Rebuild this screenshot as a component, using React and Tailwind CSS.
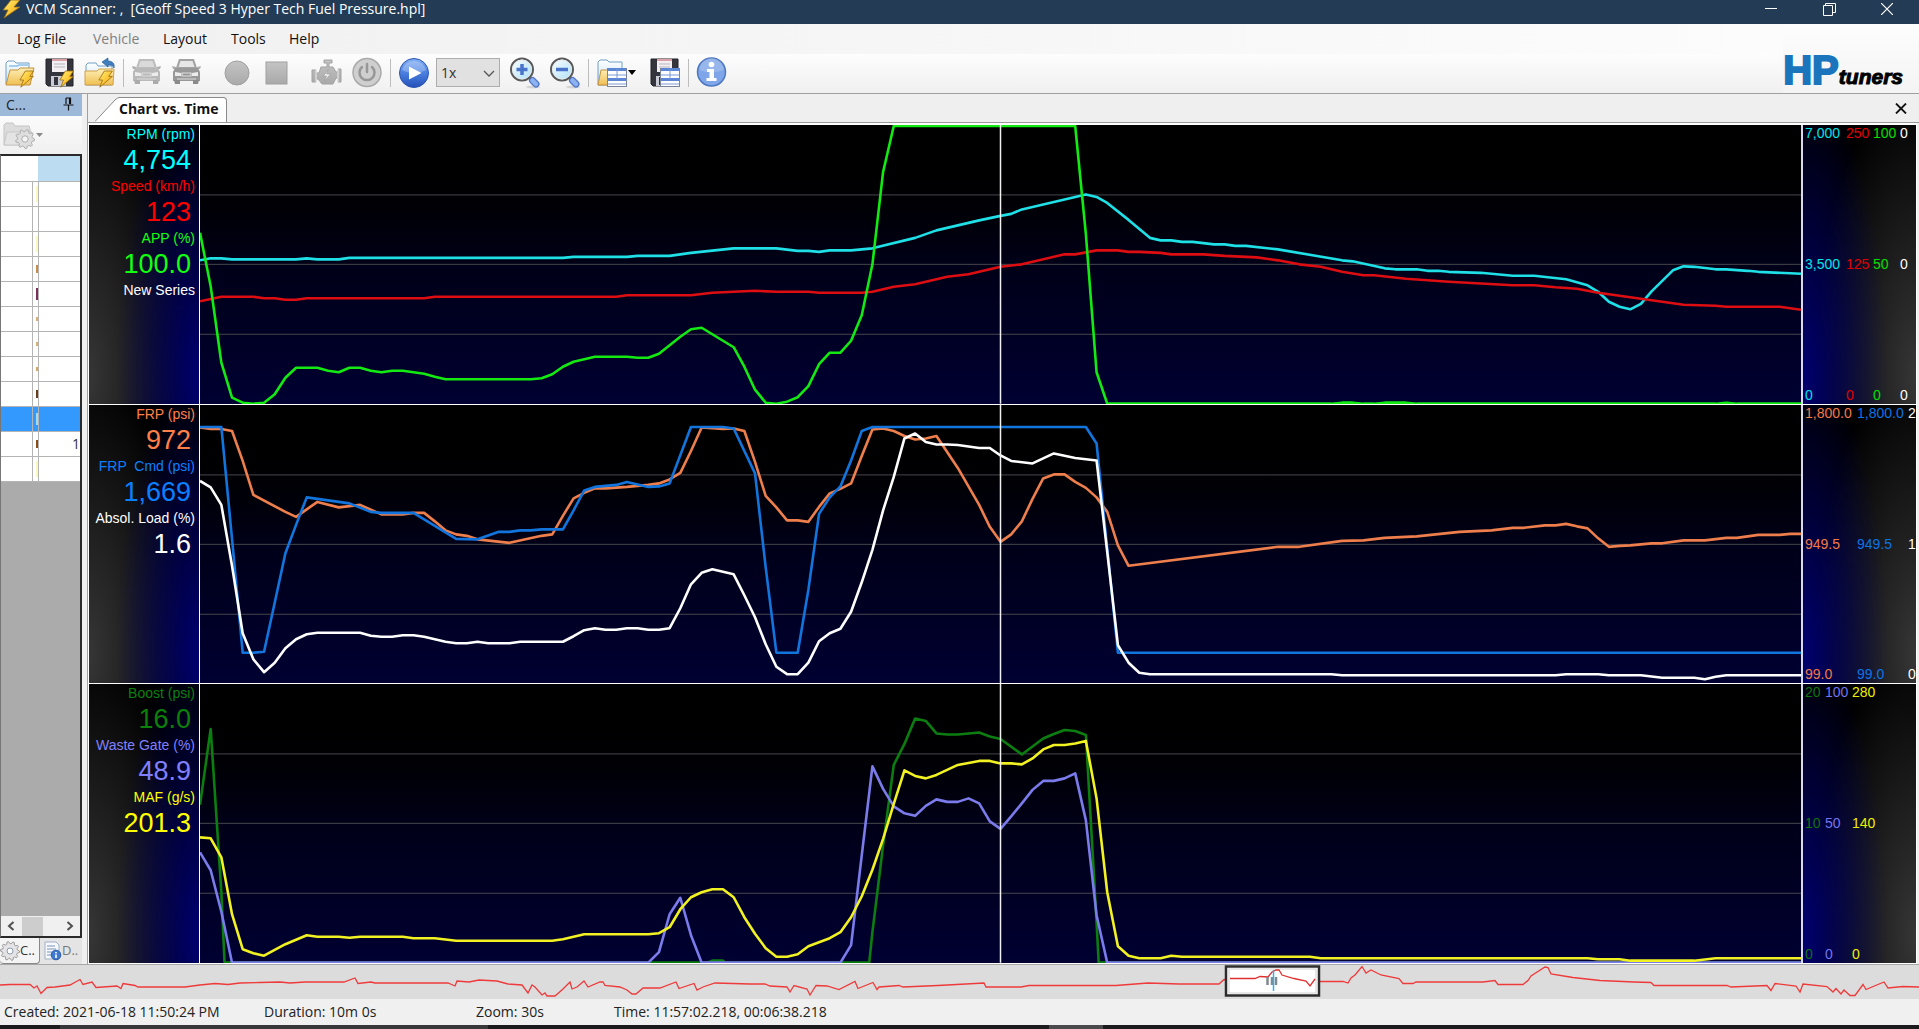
import React from "react";

const RAW = {
  rpm: "0 135.5 1 133.5 2 133.5 3 134.5 9 134.5 10 133.5 11 134.5 13 134.5 14 133 34 133 35 132 40 132 41 131 44 131 46 128 50 123.5 54 123.5 56 126 57 126 58 127 59 125.5 61 125.5 63 123.5 67 113 69 105.5 73 95.5 75 91 76 89 77 84.5 83 69.5 84 72 85 78 87 95 89 113 90 115.5 91 115.5 92 117 93 117 95 119.5 96 119.5 97 121 98 121 101 124.5 107 135.5 108 136.5 111 143.5 112 144.5 114 144.5 115 146 116 146 117 147 120 148 123 151 125 151 128 154.5 130 160.5 131 167 132 177 133 182 134 184.5 135 179 136 166.5 138 145.5 139 141.5 140 142 142 144.5 143 144.5 145 146 146 147 149 148.5 150 149",
  speed: "0 176.5 2 172 5 172 6 173.5 7 173.5 8 175 9 175 10 173.5 21 173.5 22 172 39 172 40 170.5 46 170.5 48 168 50 167 52 166 54 167 57 167 58 168 62 168 63 167 65 162 67 159.5 70 152 72 149.5 75 142 77 139.5 81 129.5 82 129.5 84 125.5 86 125.5 87 127 88 127 90 128 91 129.5 94 129.5 96 131 99 132.5 101 135.5 103 139.5 105 142 107 147 109 150.5 110 150.5 113 154 117 157 123 160.5 125 160.5 127 162.5 129 164 131 168 134 172.5 136 175.5 139 180 142 181 143 182 148 182 150 185",
  app: "0 108 1 161.5 2 238 3 273 4 278 5 279 6 278 7 269.5 8 253 9 243 11 243 12 246 13 247.5 14 243 15 243 16 246 17 247.5 18 246 19 246 21 249 22 252 23 254.5 31 254.5 32 253.5 33 249.5 34 242 35 237 37 232 40 232 41 233 42 233 43 229 44 220.5 45 212 46 204.5 47 203 48 209.5 50 222.5 51 242 52 265 53 278 54 279 55 277 56 272.5 57 261.5 58 239.5 59 228 60 228 61 216 62 190.5 63 139.5 64 47 65 1 82 1 83 109.5 84 247.5 85 279 106 279 107 278 108 278 109 279 110 279 111 278 113 278 114 279 142 279 143 278 144 279 150 279",
  frp: "0 22.5 1 24 2 24 3 26 4 56 5 90 8 107 9 112 10 104.5 11 97 13 102.5 15 100 17 109.5 19 109.5 20 108 21 108 22 116.5 23 125.5 24 129.5 25 131 26 134.5 29 138 32 131 33 129.5 34 111 35 93.5 36 88 37 83.5 38 83.5 40 82 42 80 43 78.5 44 74.5 45 68 46 46 47 22.5 49 24 50 23.5 51 26 52 57 53 91 54 102.5 55 115.5 56 115.5 57 117 58 102 59 88.5 60 84 61 78.5 62 51 63 24.5 64 23.5 65 26 66 31 67 34.5 68 33.5 69 31 71 63 73 100 74 122 75 137 76 129.5 77 116.5 78 94 79 73.5 80 69.5 81 69.5 82 77 83 83 84 92.5 85 107 86 140.5 87 161 101 142 103 142 107 136 109 135.5 111 133 114 131.5 118 127 121 125.5 123 123 124 123 126 120.5 127 120.5 128 119 129 121.5 130 123.5 131 133.5 132 142 133 141 134 140.5 136 138.5 137 138.5 139 135.5 141 135.5 143 133 144 133 146 130 148 130 149 129 150 129",
  cmd: "0 22 2 22 3 134 4 248 5 248 6 247 7 198 8 148.5 9 120 10 92.5 12 95.5 14 98.5 16 107 17 108 20 108 21 114.5 24 134 26 134.5 28 127 29 127 30 125.5 31 125.5 32 124.5 34 124.5 35 105.5 36 85.5 37 82 39 80 40 77 42 82 43 81.5 44 78.5 46 22 49 22 50 23.5 52 68.5 53 162.5 54 248 56 248 57 185 58 109 59 92.5 60 81.5 61 55.5 62 26 63 22 83 22 84 38.5 86 248 150 248",
  load: "0 76 1 82.5 2 100 3 161 4 228.5 5 254.5 6 267.5 7 258 8 243.5 9 234.5 10 229.5 11 228 15 228 16 231 17 232 18 232 19 230.5 20 230.5 21 232 23 237 24 238.5 25 238.5 26 237 27 238.5 29 238.5 30 237 34 237 35 231.5 36 225.5 37 223.5 38 225 39 225 40 223.5 41 223.5 42 225 43 225 44 223.5 45 203.5 46 179.5 47 168 48 164.5 50 169.5 51 190.5 52 212.5 53 239.5 54 262 55 269.5 56 269.5 57 258 58 236.5 59 228.5 60 224 61 207 62 177.5 63 145 64 105.5 65 72 66 33.5 67 28.5 68 37 69 39.5 70 39.5 71 40 73 43 74 43 75 50.5 76 56 78 58.5 80 48.5 82 53 84 55.5 85 147 86 240.5 87 258 88 268 89 269.5 106 269.5 107 270.5 127 270.5 128 269.5 131 269.5 132 270.5 135 270.5 137 273 140 273 141 274.5 142 272 143 270.5 150 270.5",
  boost: "0 121 1 45 2 208 2.3 279 47.5 279 48 277 49 277 49.2 279 62.7 279 63 248.5 64 161.5 65 81 66 60 67 34.5 68 37 69 49.5 70 50.5 71 50.5 73 48.5 74 52.5 75 55 77 70.5 78 62.5 79 54.5 80 50 81 46 82 47 83 51 84 238 84.2 279 150 279",
  waste: "0 168.5 1 186.5 2 228 3 279 42 279 43 268.5 44 230.5 45 214 46 251.5 47 279 60 279 61 261.5 62 171.5 63 82.5 64 105 65 122.5 66 129.5 67 132 68 122 69 115.5 70 118 71 118 72 114.5 73 119.5 74 137.5 75 145 76 132.5 77 119.5 78 106 79 97 80 97 81 94.5 82 89.5 83 136.5 84 231.5 85 279 150 279",
  maf: "0 153.5 1 154.5 2 173.5 3 230.5 4 265.5 5 269.5 6 272 8 260.5 10 251.5 11 253 13 253 14 254 15 253 19 253 20 254.5 22 254.5 24 257 33 257 34 255.5 36 250.5 42 250.5 43 249.5 44 243.5 45 225.5 46 213.5 47 208.5 48 205.5 49 205.5 50 213.5 51 233.5 52 250 53 264.5 54 273 55 273 56 270.5 57 262.5 58 258.5 59 254.5 60 248.5 61 233.5 62 212.5 63 186 64 155 65 120 66 86.5 67 92 68 94.5 69 91 71 81 73 77 74 77 75 79.5 76 79.5 77 80.5 78 74.5 79 65.5 80 61 81 61 82 59.5 83 57 84 114.5 85 208.5 86 262.5 87 272 88 274.5 90 274.5 91 272 92 273 104 273 105 274.5 130 274.5 131 275.5 133 275.5 134 277 140 277 142 274.5 150 274.5",
};

const OVERVIEW =
  "0 20 10 19.5 30 19.5 34 23 37 21 41 28.5 47 22.5 55 22 70 20 80 14.5 83 19.5 92 17 96 22.5 117 21 121 23.5 123 18.5 135 20.5 138 22 185 22 200 20 215 18.5 228 19.5 240 18 260 17.5 280 17 290 18 305 17 344 17 355 13 358 18.5 371 17 375 18 448 18 455 21 457 16 469 17 479 15 497 16 508 19 522 20 528 28 532 20 535 22 542 30 545 28 547 31 555 31 563 24 570 17 572 24 577 22 584 16 588 22 600 17 603 17 605 20.5 620 22 627 25 632 29 636 29 643 23 660 23 676 17 679 23.5 694 18.5 697 25 703 22 715 18 750 19 765 19 770 21 787 22 790 27 794 20.5 807 24 810 30 816 20.5 827 21 839 24.5 855 16.5 858 23.5 873 17.5 877 24.5 879 22 899 20.5 903 22 938 20.5 984 18 986 22 1021 22 1029 20.5 1116 20.5 1148 18 1179 19 1219 19 1224 14.5 1321 16.5 1343 16.5 1348 18 1351 13 1355 10 1362 1.5 1366 8 1371 5 1381 10 1399 13.5 1403 18.5 1413 18.5 1416 17 1483 17 1495 15.5 1498 19.5 1523 19.5 1528 15.5 1531 11 1545 2 1548 2.5 1551 9 1573 12.5 1600 15.5 1634 17 1651 17.5 1654 20.5 1727 20.5 1731 22 1767 20.5 1771 25.5 1775 18.5 1796 21 1800 27 1803 19 1827 21.5 1833 27 1836 23.5 1841 29 1844 25 1850 30.5 1855 30.5 1863 19.5 1866 24.5 1884 17 1888 23 1903 21.5 1919 22";

const CHARTS = [
  {
    series: [
      { name: "RPM (rpm)", value: "4,754", text: "text-[#00ffff]", stroke: "#1fe0e6", data: RAW.rpm },
      { name: "Speed (km/h)", value: "123", text: "text-[#ff0000]", stroke: "#dd0d12", data: RAW.speed },
      { name: "APP (%)", value: "100.0", text: "text-[#12ff12]", stroke: "#12ea12", data: RAW.app },
      { name: "New Series", value: "", text: "text-white" },
    ],
    grid: "grid-cols-[41px_27px_27px_16px]",
    axis: [
      ["7,000", "250", "100", "0"],
      ["3,500", "125", "50", "0"],
      ["0", "0", "0", "0"],
    ],
    colors: ["text-[#00e5e5]", "text-[#e00000]", "text-[#00e000]", "text-white"],
  },
  {
    series: [
      { name: "FRP (psi)", value: "972", text: "text-[#ff8048]", stroke: "#ee7f4c", data: RAW.frp },
      { name: "FRP  Cmd (psi)", value: "1,669", text: "text-[#0b80ff]", stroke: "#1275dd", data: RAW.cmd },
      { name: "Absol. Load (%)", value: "1.6", text: "text-white", stroke: "#ffffff", data: RAW.load },
    ],
    grid: "grid-cols-[52px_51px_8px]",
    axis: [
      ["1,800.0", "1,800.0", "2"],
      ["949.5", "949.5", "1"],
      ["99.0", "99.0", "0"],
    ],
    colors: ["text-[#f47a45]", "text-[#0b74e6]", "text-white"],
  },
  {
    series: [
      { name: "Boost (psi)", value: "16.0", text: "text-[#0b800b]", stroke: "#0c7d10", data: RAW.boost },
      { name: "Waste Gate (%)", value: "48.9", text: "text-[#8080ff]", stroke: "#7b7bec", data: RAW.waste },
      { name: "MAF (g/s)", value: "201.3", text: "text-[#ffff00]", stroke: "#f2f222", data: RAW.maf },
    ],
    grid: "grid-cols-[20px_27px_27px]",
    axis: [
      ["20", "100", "280"],
      ["10", "50", "140"],
      ["0", "0", "0"],
    ],
    colors: ["text-[#0b740b]", "text-[#7474ee]", "text-[#eeee00]"],
  },
];

const MARKS = [
  "h-4 bg-[#f8f8c0]", "h-0", "h-4 bg-[#f8f8c0]", "h-2 bg-[#c98a4a]", "h-3 bg-[#7a2f5a]", "h-1 bg-[#d9b070]",
  "h-1 bg-[#d9b070]", "h-1 bg-[#d9a860]", "h-2 bg-[#6b3a1a]", "h-3 bg-[#9fdcff]", "h-2 bg-[#8a4a1a]", "h-4 bg-[#f8f8c0]",
];

function Bolt({ x = 0, y = 0, s = 1 }) {
  return (
    <path
      transform={`translate(${x} ${y}) scale(${s})`}
      d="M7 0h9l-4 6h4L2 18l3-8H1z"
      fill="url(#bolt)"
      stroke="#9a6a10"
      strokeWidth="0.9"
      strokeLinejoin="round"
    />
  );
}

function Defs() {
  return (
    <svg width="0" height="0" className="absolute" aria-hidden="true">
      <defs>
        <linearGradient id="bolt" x1="0" y1="0" x2="1" y2="1">
          <stop offset="0" stopColor="#fff27a" />
          <stop offset="0.6" stopColor="#fbc02d" />
          <stop offset="1" stopColor="#e08a10" />
        </linearGradient>
        <linearGradient id="fold" x1="0" y1="0" x2="0" y2="1">
          <stop offset="0" stopColor="#fdeeb5" />
          <stop offset="1" stopColor="#f0bf52" />
        </linearGradient>
        <linearGradient id="paper" x1="0" y1="0" x2="0" y2="1">
          <stop offset="0" stopColor="#ffffff" />
          <stop offset="1" stopColor="#bfe0f5" />
        </linearGradient>
        <linearGradient id="grey" x1="0" y1="0" x2="0" y2="1">
          <stop offset="0" stopColor="#c4c4c4" />
          <stop offset="1" stopColor="#a9a9a9" />
        </linearGradient>
        <linearGradient id="blue" x1="0" y1="0" x2="0" y2="1">
          <stop offset="0" stopColor="#86b0f4" />
          <stop offset="0.5" stopColor="#4a7fe0" />
          <stop offset="1" stopColor="#2450b8" />
        </linearGradient>
        <linearGradient id="lens" x1="0" y1="0" x2="1" y2="1">
          <stop offset="0" stopColor="#ffffff" />
          <stop offset="1" stopColor="#a9e0f8" />
        </linearGradient>
      </defs>
    </svg>
  );
}

const Ico = ({ children }) => (
  <svg width="32" height="32" viewBox="0 0 32 32" fill="none" aria-hidden="true">
    {children}
  </svg>
);

const FolderOpen = () => (
  <Ico>
    <path d="M2 27V6l2-2h6l2 2h13v21z" fill="url(#paper)" stroke="#6fa0c8" />
    <path d="M5 9h8l2-1h9" stroke="#8fc0e8" strokeWidth="1.5" />
    <path d="M2 28L6 13h8l2-2h14l-4 17z" fill="url(#fold)" stroke="#c8913a" />
    <Bolt x={15} y={14} s={0.9} />
  </Ico>
);
const FloppyBody = () => (
  <>
    <path d="M2 2h27v27H4l-2-2z" fill="#35353d" stroke="#23232a" />
    <rect x="8" y="2" width="15" height="13" fill="#f4eff2" />
    <path d="M8 3h15" stroke="#d9a0a8" strokeWidth="2" />
    <path d="M10 7h11M10 10h11" stroke="#b5b5bd" />
    <rect x="7" y="19" width="15" height="10" fill="#c9ccd4" />
    <rect x="10" y="20" width="4" height="8" fill="#35353d" />
  </>
);
const Floppy = () => (
  <Ico>
    <FloppyBody />
    <Bolt x={15} y={14} s={0.9} />
  </Ico>
);
const FolderBack = () => (
  <Ico>
    <path d="M2 28V8l2-2h8l2 3h14v19z" fill="url(#paper)" stroke="#6fa0c8" />
    <path d="M1 28V14h12l2-2h15l-1 16z" fill="url(#fold)" stroke="#d3a048" />
    <path d="M18 5l6-4v3c4 0 7 2 6 7-1-3-3-3-6-3v2z" fill="#3f7fc0" stroke="#2a5f9a" strokeWidth="0.7" />
    <Bolt x={14} y={14} s={0.9} />
  </Ico>
);
const Car = ({ dark }) => (
  <Ico>
    <path d="M8 2h15l3 9H5z" fill={dark ? "#a2a2a2" : "#bdbdbd"} />
    <path d="M9.5 4h12l2 6h-16z" fill={dark ? "#e6e6e6" : "#dadada"} />
    <path d="M1 9l4 1v2H2zM30 9l-4 1v2h3z" fill="#aeaeae" />
    <path d="M4 11h23l2 4v9H2v-9z" fill={dark ? "#989898" : "#b9b9b9"} />
    <path d="M3 23h6v4H4zM22 23h6l-1 4h-5z" fill={dark ? "#8a8a8a" : "#ababab"} />
    <path d="M4 15l6 1v3H4zM27 15l-6 1v3h6z" fill="#ececec" />
    <path d="M11 16h9v3h-9zM6 22h19" stroke="#dedede" strokeWidth="1.2" />
  </Ico>
);
const Engine = () => (
  <Ico>
    <path
      d="M13 3h8v3h-3v4h4l3 5h2v-3h3v13h-3v-4h-2l-3 6H11l-4-5H5v3H1V13h4v3h3l2-6h6V6h-3z"
      fill="url(#grey)"
      stroke="#a2a2a2"
    />
    <path d="M5 13v12M27 12v13" stroke="#efefef" />
    <path d="M17.500 12l-5 7h3l-2 5 6-7h-4z" fill="#f2f2f2" stroke="#999" strokeWidth="0.6" />
  </Ico>
);
const Power = () => (
  <Ico>
    <circle cx="16" cy="15.500" r="14" fill="#cfcfcf" stroke="#a9a9a9" strokeWidth="1.5" />
    <path d="M11 10a7.500 7.500 0 1 0 10 0" stroke="#979797" strokeWidth="2.500" strokeLinecap="round" />
    <path d="M16 7v8" stroke="#979797" strokeWidth="2.500" strokeLinecap="round" />
  </Ico>
);
const Play = () => (
  <Ico>
    <circle cx="16" cy="16" r="14.500" fill="url(#blue)" stroke="#2a56b4" />
    <path d="M4 13a12.500 12.500 0 0 1 24 0c-8 4-16 4-24 0z" fill="#ffffff" opacity="0.25" />
    <path d="M11 9.500v13L23.500 16z" fill="#fff" />
  </Ico>
);
const Zoom = ({ plus }) => (
  <Ico>
    <ellipse cx="24" cy="30" rx="7" ry="1.500" fill="#000" opacity="0.12" />
    <path d="M20 20l4 4" stroke="#6d6d6d" strokeWidth="3" />
    <path d="M23.500 23.500l3.500 3.500" stroke="#4f78c8" strokeWidth="7" strokeLinecap="round" />
    <path d="M23.500 23.500l3.500 3.500" stroke="#8fb2f0" strokeWidth="4.500" strokeLinecap="round" />
    <circle cx="13" cy="12.500" r="11" fill="url(#lens)" stroke="#5a5a5a" strokeWidth="2" />
    <circle cx="13" cy="12.500" r="9.500" stroke="#e8e8e8" />
    <path d={plus ? "M7.500 12.500h11M13 7v11" : "M7 12.500h12"} stroke="#4a74cc" strokeWidth="3.500" />
  </Ico>
);
const GridBadge = () => (
  <>
    <rect x="11.500" y="11.500" width="19" height="18" fill="#fff" stroke="#7a8598" />
    <path d="M12 12.500h18M12 22.500h18" stroke="#5c86d6" strokeWidth="3" />
    <path d="M12 18h18M21 12v10M12 27h18" stroke="#7a9ad8" />
  </>
);
const FolderGrid = () => (
  <Ico>
    <path d="M2 28V5l2-2h7l2 2h13v23z" fill="url(#paper)" stroke="#6fa0c8" />
    <path d="M2 28l3-15h9v15z" fill="url(#fold)" stroke="#c8913a" />
    <GridBadge />
  </Ico>
);
const FloppyGrid = () => (
  <Ico>
    <FloppyBody />
    <GridBadge />
  </Ico>
);
const Info = () => (
  <Ico>
    <circle cx="15.500" cy="15" r="14" fill="#7ea6e8" stroke="#4d77c0" strokeWidth="1.500" />
    <path d="M3.500 13a12 12 0 0 1 24 0c-8 3-16 3-24 0z" fill="#fff" opacity="0.2" />
    <circle cx="15.500" cy="7.500" r="2.800" fill="#fff" />
    <path d="M11 12h7v9h2.500v3h-10v-3h3v-6H11z" fill="#fff" />
  </Ico>
);

function gearPath(cx, cy, r, n) {
  const pts = [];
  for (let i = 0; i < n * 4; i++) {
    const a = (i / (n * 4)) * Math.PI * 2;
    const rr = i % 4 < 2 ? r : r * 0.78;
    pts.push(`${(cx + Math.cos(a) * rr).toFixed(1)},${(cy + Math.sin(a) * rr).toFixed(1)}`);
  }
  return "M" + pts.join("L") + "Z";
}

function ToolButton({ label, disabled, wide, children }) {
  return (
    <button
      type="button"
      aria-label={label}
      disabled={disabled}
      className={(wide ? "w-12 " : "w-10 ") + "flex h-9 shrink-0 items-center justify-center"}
    >
      {children}
    </button>
  );
}

const Sep = () => <span className="mx-[3px] h-7 w-px shrink-0 bg-[#bdbdbd]" />;

function TitleBar() {
  return (
    <header className="flex h-6 shrink-0 items-center overflow-hidden bg-[#243b55] text-white">
      <svg width="20" height="20" viewBox="0 0 20 20" className="mb-1 ml-px" aria-hidden="true">
        <path d="M10 0h9l-6 7h6L3 18l4-8H2z" fill="url(#bolt)" stroke="#8a6a20" strokeWidth="0.8" />
      </svg>
      <h1 className="ml-[5px] whitespace-pre pb-1.5 text-[14px] leading-5">
        VCM Scanner: ,  [Geoff Speed 3 Hyper Tech Fuel Pressure.hpl]
      </h1>
      <div className="ml-auto flex pb-1.5">
        <button type="button" aria-label="Minimize" className="flex h-5 w-[58px] items-center justify-center">
          <svg width="12" height="12" viewBox="0 0 12 12"><path d="M0 5.500h12" stroke="#fff" /></svg>
        </button>
        <button type="button" aria-label="Restore" className="flex h-5 w-[58px] items-center justify-center">
          <svg width="13" height="13" viewBox="0 0 13 13" fill="none" stroke="#fff">
            <path d="M0.500 2.500h9v10h-9zM2.500 2.500v-2h10v9h-3" />
          </svg>
        </button>
        <button type="button" aria-label="Close" className="flex h-5 w-[58px] items-center justify-center">
          <svg width="12" height="12" viewBox="0 0 12 12" stroke="#fff" strokeWidth="1.200"><path d="M0 0l12 12M12 0L0 12" /></svg>
        </button>
        <span className="w-[3px]" />
      </div>
    </header>
  );
}

function TopBars() {
  return (
    <div className="flex shrink-0 border-b border-[#a0a0a0] bg-linear-to-r from-[#f0f0f0] to-[#fdfdfd]">
      <div className="min-w-0 flex-1">
        <nav className="flex h-[30px] items-center pb-0.5 text-[14px] text-[#111]">
          <button type="button" className="ml-[17px] w-[74px] text-left whitespace-nowrap">Log File</button>
          <button type="button" disabled className="w-[70px] pl-0.5 text-left text-[#808080]">Vehicle</button>
          <button type="button" className="w-[68px] pl-0.5 text-left">Layout</button>
          <button type="button" className="w-[58px] pl-0.5 text-left">Tools</button>
          <button type="button" className="pl-0.5 text-left">Help</button>
        </nav>
        <div className="flex h-[39px] items-center bg-linear-to-b from-[#fdfdfd] to-[#f0f0f0] pb-0.5">
          <ToolButton label="Open log file"><FolderOpen /></ToolButton>
          <ToolButton label="Save log file"><Floppy /></ToolButton>
          <ToolButton label="Reopen log file"><FolderBack /></ToolButton>
          <Sep />
          <ToolButton label="Connect vehicle" disabled><Car /></ToolButton>
          <ToolButton label="Vehicle info" disabled><Car dark /></ToolButton>
          <span className="w-[10px]" />
          <ToolButton label="Record" disabled>
            <Ico><circle cx="16" cy="16" r="12" fill="url(#grey)" stroke="#a0a0a0" /></Ico>
          </ToolButton>
          <ToolButton label="Stop" disabled>
            <Ico><rect x="5" y="5" width="21" height="22" fill="url(#grey)" stroke="#a0a0a0" /></Ico>
          </ToolButton>
          <span className="w-[10px]" />
          <ToolButton label="Engine" disabled><Engine /></ToolButton>
          <ToolButton label="Power" disabled><Power /></ToolButton>
          <Sep />
          <ToolButton label="Play"><Play /></ToolButton>
          <div className="relative ml-0.5 h-[29px] w-16 shrink-0">
            <select
              aria-label="Playback speed"
              className="h-full w-full appearance-none border border-[#adadad] bg-[#e1e1e1] pl-1 text-[14px] text-[#333]"
            >
              <option>1x</option>
            </select>
            <svg width="12" height="8" viewBox="0 0 12 8" className="pointer-events-none absolute top-3 right-[5px]" fill="none">
              <path d="M1 1l5 5 5-5" stroke="#555" strokeWidth="1.300" />
            </svg>
          </div>
          <span className="w-[5px]" />
          <ToolButton label="Zoom in"><Zoom plus /></ToolButton>
          <ToolButton label="Zoom out"><Zoom /></ToolButton>
          <Sep />
          <ToolButton label="Open layout" wide>
            <FolderGrid />
            <svg width="8" height="5" viewBox="0 0 8 5"><path d="M0 0h8L4 5z" fill="#000" /></svg>
          </ToolButton>
          <span className="w-[5px]" />
          <ToolButton label="Save layout"><FloppyGrid /></ToolButton>
          <Sep />
          <ToolButton label="Information"><Info /></ToolButton>
        </div>
      </div>
      <div className="flex items-end bg-linear-to-b from-[#fdfdfd] to-[#f4f4f4] pr-4">
        <div className="flex items-baseline font-['Liberation_Sans',sans-serif] font-bold leading-8">
          <span className="text-[40px] text-[#1b75bc] [-webkit-text-stroke:2px_#1b75bc]">HP</span>
          <span className="text-[21px] text-black italic [-webkit-text-stroke:1px_#000]">tuners</span>
        </div>
      </div>
    </div>
  );
}

function ChannelsPanel() {
  return (
    <aside className="flex w-[82px] shrink-0 flex-col overflow-hidden">
      <div className="flex h-[22px] shrink-0 items-center justify-between bg-[#9db9da] pr-2 pb-0.5 pl-1.5 text-[14px] text-[#222]">
        <span>C...</span>
        <button type="button" aria-label="Pin panel">
          <svg width="11" height="14" viewBox="0 0 11 14" fill="none" stroke="#111">
            <path d="M3 1h5M3 1v6M7.500 1v6M6.500 1v6M0.500 8h10M5.500 8v5.500" strokeWidth="1.200" />
          </svg>
        </button>
      </div>
      <div className="flex h-[38px] shrink-0 items-center bg-linear-to-b from-[#fbfbfb] to-[#f0f0f0]">
        <button type="button" aria-label="Channel options" className="flex items-center pl-0.5" disabled>
          <svg width="34" height="30" viewBox="0 0 34 30" aria-hidden="true">
            <path d="M2 25V5l2-2h7l2 3h14l1 3v16z" fill="#dcdcdc" stroke="#c4c4c4" />
            <path d="M2 25l3-13h25l-3 13z" fill="#e4e4e4" stroke="#c8c8c8" />
            <path d={gearPath(23, 19, 9.5, 9)} fill="#dedede" stroke="#adadad" />
            <circle cx="23" cy="19" r="3.200" fill="#f4f4f4" stroke="#adadad" />
          </svg>
          <svg width="7" height="4" viewBox="0 0 7 4"><path d="M0 0h7L3.500 4z" fill="#8a8a8a" /></svg>
        </button>
      </div>
      <div className="flex min-h-0 flex-1 flex-col border-y-2 border-r-2 border-l border-[#2a2a2a] border-l-[#777] bg-[#ababab]">
        <table className="w-full table-fixed border-collapse">
          <colgroup>
            <col className="w-[31px]" />
            <col className="w-1.5" />
            <col />
          </colgroup>
          <tbody>
            <tr className="h-[25px] border-b border-[#b4b4b4]">
              <td className="bg-white" />
              <td className="bg-white" />
              <td className="bg-[#bcdcf2]" />
            </tr>
            {MARKS.map((m, i) => (
              <tr key={i} className={"h-[25px] border-b border-[#b4b4b4] " + (i === 9 ? "bg-[#3399ff]" : "bg-white")}>
                <td className="border-r border-[#b4b4b4] p-0" />
                <td className="border-r border-[#b4b4b4] p-0">
                  <span className={"ml-auto block w-0.5 " + m} />
                </td>
                <td className="p-0 text-right text-[14px] leading-5 text-[#333]">{i === 10 ? "1" : ""}</td>
              </tr>
            ))}
          </tbody>
        </table>
        <div className="mt-auto flex h-5 items-center justify-between bg-[#f0f0f0] px-1.5">
          <button type="button" aria-label="Scroll left">
            <svg width="8" height="10" viewBox="0 0 8 10" fill="none"><path d="M6.500 1L2 5l4.500 4" stroke="#505050" strokeWidth="2" /></svg>
          </button>
          <span className="mr-4 h-[19px] w-[21px] bg-[#cdcdcd]" />
          <button type="button" aria-label="Scroll right">
            <svg width="8" height="10" viewBox="0 0 8 10" fill="none"><path d="M1.500 1L6 5 1.500 9" stroke="#505050" strokeWidth="2" /></svg>
          </button>
        </div>
      </div>
      <div className="flex h-[26px] shrink-0 bg-[#e4e4e4] text-[13px] text-[#333]">
        <button type="button" className="flex w-10 items-center rounded-b-sm border-r border-b border-[#888] bg-[#f4f4f4]">
          <svg width="20" height="22" viewBox="0 0 20 22" className="shrink-0" aria-hidden="true">
            <path d={gearPath(10, 11, 9.5, 10)} fill="#e4e4e6" stroke="#9a9a9a" />
            <circle cx="10" cy="11" r="3" fill="#fff" stroke="#8a9ab0" />
          </svg>
          C..
        </button>
        <button type="button" className="flex flex-1 items-center pl-1 text-[#777]">
          <svg width="18" height="20" viewBox="0 0 18 20" className="shrink-0" aria-hidden="true">
            <path d="M1 1h11l3 3v14H1z" fill="#f6f8fb" stroke="#9fb0c8" />
            <path d="M3 5h8M3 8h9M3 11h6M3 14h5" stroke="#7d93b8" />
            <circle cx="12" cy="14" r="4.800" fill="#3f7ad0" stroke="#2a5aa8" />
            <path d="M12 11v1.500M12 13.500v3.500" stroke="#fff" strokeWidth="1.600" />
          </svg>
          D..
        </button>
      </div>
    </aside>
  );
}

function ChartRow({ chart }) {
  return (
    <section className="flex min-h-0 flex-1 border-b border-white">
      <div className="w-[111px] shrink-0 overflow-hidden border-r border-white bg-black bg-[radial-gradient(ellipse_75%_105%_at_100%_90%,#000070,transparent),radial-gradient(ellipse_90%_105%_at_0%_90%,#363636,transparent)] pr-1 text-right">
        {chart.series.map((s) => (
          <div key={s.name} className={s.text}>
            <div className="h-[19px] text-[14px] leading-[19px] whitespace-pre">{s.name}</div>
            {s.value && <div className="h-[33px] pr-1 text-[27px] leading-8">{s.value}</div>}
          </div>
        ))}
      </div>
      <div className="min-w-0 flex-1 bg-linear-to-b from-black via-[#000018] to-[#000032]">
        <svg className="block h-full w-full" viewBox="0 0 150 279" preserveAspectRatio="none" role="img" aria-label="Chart vs. Time">
          {[70, 139.5, 209.5].map((y) => (
            <path key={y} d={`M0 ${y}H150`} stroke="#46464c" vectorEffect="non-scaling-stroke" />
          ))}
          {chart.series.map((s) =>
            s.data ? (
              <polyline
                key={s.name}
                points={s.data}
                fill="none"
                stroke={s.stroke}
                strokeWidth="2.6"
                strokeLinejoin="round"
                vectorEffect="non-scaling-stroke"
              />
            ) : null
          )}
          <path d="M75 0V279" stroke="#f0f0f0" strokeWidth="1.5" vectorEffect="non-scaling-stroke" />
        </svg>
      </div>
      <div className="flex w-[115px] shrink-0 flex-col justify-between overflow-hidden border-l-2 border-[#d8d8f0] bg-black bg-[radial-gradient(ellipse_75%_105%_at_0%_90%,#000070,transparent),radial-gradient(ellipse_90%_105%_at_100%_90%,#363636,transparent)] pl-0.5 text-[14px] leading-[17px]">
        {chart.axis.map((row, i) => (
          <div key={i} className={"grid " + chart.grid}>
            {row.map((v, j) => (
              <span key={j} className={"whitespace-nowrap " + chart.colors[j]}>{v}</span>
            ))}
          </div>
        ))}
      </div>
    </section>
  );
}

function ChartArea() {
  return (
    <main className="ml-[5px] flex min-w-0 flex-1 flex-col border-l border-[#a0a0a0] bg-[#f0f0f0]">
      <div className="flex h-[29px] shrink-0 items-end border-b border-[#9a9a9a] bg-[#efefef]">
        <button type="button" className="flex h-[25px] items-end pl-[7px]">
          <svg width="24" height="25" viewBox="0 0 24 25" className="shrink-0" aria-hidden="true">
            <path d="M0 24.500L20 3q3-2.500 4-2.500V25H0z" fill="#fff" />
            <path d="M0 24.500L20 3q3-2.500 4-2.500" fill="none" stroke="#8a8a8a" />
          </svg>
          <span className="flex h-[25px] items-center rounded-tr-sm border-t border-r border-[#8a8a8a] bg-white pr-[7px] pb-[3px] text-[14px] leading-5 font-bold text-[#111]">
            Chart vs. Time
          </span>
        </button>
        <button type="button" aria-label="Close tab" className="mr-3 mb-2 ml-auto">
          <svg width="12" height="11" viewBox="0 0 12 11" stroke="#111" strokeWidth="1.800"><path d="M1 0.500l10 10M11 0.500l-10 10" /></svg>
        </button>
      </div>
      <div className="mr-0.5 flex min-h-0 flex-1 flex-col border-t-2 border-r border-l border-white font-['Liberation_Sans',sans-serif]">
        {CHARTS.map((c, i) => (
          <ChartRow key={i} chart={c} />
        ))}
      </div>
    </main>
  );
}

function Overview() {
  return (
    <div className="h-[35px] shrink-0 border-t border-[#a8a8a8] bg-[#dcdcdc]">
      <svg className="block h-full w-full" viewBox="0 0 1919 34" preserveAspectRatio="none" aria-label="Log overview">
        <polyline points={OVERVIEW} fill="none" stroke="#ee3a3a" strokeWidth="1.3" vectorEffect="non-scaling-stroke" />
        <rect x="1226" y="1.500" width="93" height="29" fill="#fff" stroke="#2c2c2c" strokeWidth="2.5" />
        <rect x="1229" y="4" width="87" height="24" fill="none" stroke="#d0d0d0" />
        <polyline
          points="1230 13.5 1255 13.5 1260 11.5 1268 12 1272 7 1276 5 1279 5 1282 10 1294 13.5 1306 16 1310 21 1315 14"
          fill="none"
          stroke="#e03030"
          strokeWidth="1.3"
        />
        <path d="M1267.500 12v8M1272 12v8M1276 12v8" stroke="#808890" strokeWidth="2.500" />
        <path d="M1273.500 5v21" stroke="#28b4f0" strokeWidth="1.500" />
      </svg>
    </div>
  );
}

export default function App() {
  return (
    <div className="flex h-screen flex-col overflow-hidden bg-[#f0f0f0] font-['Open_Sans','Noto_Sans',sans-serif]">
      <Defs />
      <TitleBar />
      <TopBars />
      <div className="flex min-h-0 flex-1">
        <ChannelsPanel />
        <ChartArea />
      </div>
      <Overview />
      <footer className="flex h-[26px] shrink-0 items-center pb-0.5 pl-1 text-[14px] text-[#222]">
        <span className="w-[260px]">Created: 2021-06-18 11:50:24 PM</span>
        <span className="w-[212px]">Duration: 10m 0s</span>
        <span className="w-[138px]">Zoom: 30s</span>
        <span>Time: 11:57:02.218, 00:06:38.218</span>
      </footer>
      <div className="flex h-1 shrink-0 bg-[#1b1a1c]">
        <span className="ml-[60px] w-[428px] bg-[#38383a]" />
        <span className="ml-[561px] w-[54px] bg-[#4a494c]" />
      </div>
    </div>
  );
}
